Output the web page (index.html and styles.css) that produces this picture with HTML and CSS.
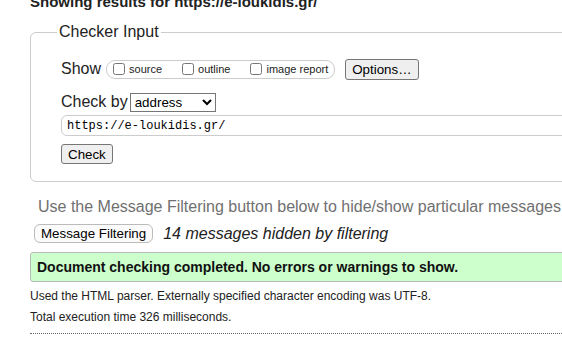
FILE: index.html
```html
<!DOCTYPE html>
<html lang="en">
<head>
    <meta charset="UTF-8">
    <title>Nu Html Checker</title>
    <link rel="stylesheet" href="styles.css">
</head>
<body>
<div class="page">
    <h2 class="results-title">Showing results for https://e-loukidis.gr/</h2>

    <fieldset class="checker">
        <legend>Checker Input</legend>
        <div class="row show-row">
            <span>Show</span>
            <div class="show-group">
                <label><input type="checkbox">source</label>
                <label><input type="checkbox">outline</label>
                <label><input type="checkbox">image report</label>
            </div>
            <button class="btn">Options…</button>
        </div>
        <div class="row check-row">
            <span>Check by</span>
            <select class="check-by">
                <option>address</option>
            </select>
        </div>
        <input class="url" type="text" value="https://e-loukidis.gr/">
        <button class="btn check-btn">Check</button>
    </fieldset>

    <p class="hint">Use the Message Filtering button below to hide/show particular messages</p>
    <div class="filter-row">
        <button class="filter-btn">Message Filtering</button>
        <em>14 messages hidden by filtering</em>
    </div>

    <p class="success">Document checking completed. No errors or warnings to show.</p>
    <p class="details">Used the HTML parser. Externally specified character encoding was UTF-8.</p>
    <p class="details">Total execution time 326 milliseconds.</p>
    <hr class="end">
</div>
</body>
</html>
```

FILE: styles.css
```css
html, body {
    overflow: hidden;
}
body {
    margin: 0;
    font-family: 'Liberation Sans', Arial, sans-serif;
    color: #222;
    background: #fff;
}
.page {
    padding-left: 30px;
    width: 640px;
}
.results-title {
    font-size: 15px;
    line-height: 18px;
    font-weight: bold;
    margin: -7px 0 0;
    white-space: nowrap;
}
.checker {
    margin: 12px 0 0;
    padding: 0 0 17px 30px;
    border: 1px solid #ccc;
    border-radius: 6px;
}
.checker legend {
    font-size: 16px;
    line-height: 18px;
    padding: 0 2px;
    margin-left: -4px;
}
.row {
    display: flex;
    align-items: center;
    font-size: 16px;
    white-space: nowrap;
}
.show-row {
    margin-top: 17px;
    height: 22px;
}
.show-group {
    display: flex;
    align-items: center;
    height: 19px;
    box-sizing: border-box;
    margin-left: 5px;
    padding: 0 6px;
    border: 1px solid #ccc;
    border-radius: 9px;
    font-size: 11px;
}
.show-group label {
    display: flex;
    align-items: center;
    margin-right: 20px;
}
.show-group label:last-child {
    margin-right: 0;
}
.show-group input {
    width: 12px;
    height: 12px;
    margin: 0 4px 0 0;
}
.btn {
    font-family: 'Liberation Sans', Arial, sans-serif;
    font-size: 13.33px;
    color: #000;
    background: #efefef;
    border: 1px solid #767676;
    border-radius: 3px;
    padding: 1px 6px;
    height: 21px;
}
.show-row .btn {
    margin-left: 10px;
}
.check-row {
    margin-top: 12px;
    height: 20px;
}
.check-by {
    margin-left: 2px;
    width: 86px;
    height: 19px;
    font-family: 'Liberation Sans', Arial, sans-serif;
    font-size: 13.33px;
    border: 1px solid #767676;
    background: #fff;
    color: #000;
}
.url {
    display: block;
    margin-top: 3px;
    width: 560px;
    height: 21px;
    box-sizing: border-box;
    padding: 0 5px;
    border: 1px solid #ccc;
    border-radius: 6px;
    font-family: 'Liberation Mono', 'DejaVu Sans Mono', monospace;
    font-size: 12px;
    color: #000;
}
.check-btn {
    display: block;
    margin-top: 8px;
    height: 20px;
}
.hint {
    margin: 16px 0 0 8px;
    font-size: 16px;
    line-height: 18px;
    color: #707070;
    white-space: nowrap;
}
.filter-row {
    display: flex;
    align-items: center;
    margin: 8px 0 0 4px;
    height: 19px;
    white-space: nowrap;
}
.filter-btn {
    font-family: 'Liberation Sans', Arial, sans-serif;
    font-size: 13.33px;
    color: #000;
    background: #fbfbfb;
    border: 1px solid #bbb;
    border-radius: 6px;
    padding: 0 6px;
    height: 19px;
}
.filter-row em {
    margin-left: 10px;
    font-size: 16px;
}
.success {
    margin: 9px 0 0;
    padding: 5px 6px;
    font-size: 14px;
    line-height: 18px;
    font-weight: bold;
    color: #111;
    background: #ccffcc;
    border: 1px solid #bbb;
    border-radius: 3px;
}
.details {
    margin: 7px 0 0;
    font-size: 12px;
    line-height: 14px;
    white-space: nowrap;
}
.end {
    margin: 9px 0 0;
    border: 0;
    border-top: 1px dotted #666;
}
```
